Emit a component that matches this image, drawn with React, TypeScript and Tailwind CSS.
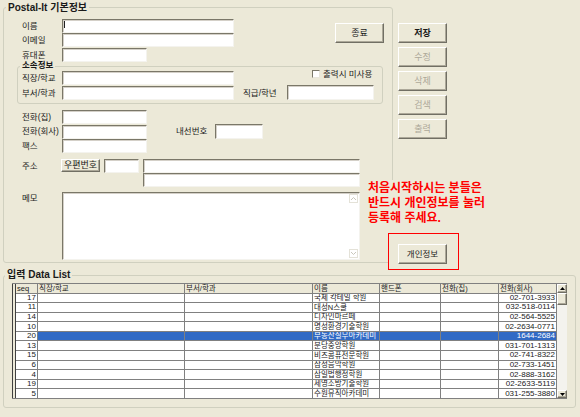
import React from 'react';

const font = "font-['Liberation_Sans','Noto_Sans_CJK_KR',sans-serif]";
const inp =
  'bg-white border border-t-[#7a7768] border-l-[#7a7768] border-r-[#f4f3ee] border-b-[#f4f3ee] shadow-[inset_1px_1px_0_#d4d0c8]';
const btn =
  'flex items-center justify-center bg-[#ECE9D8] border border-t-white border-l-white border-r-[#716f64] border-b-[#716f64] shadow-[inset_-1px_-1px_0_#aca899] leading-none';
const label = 'text-[8.5px] leading-none text-[#1a1a1a] whitespace-nowrap';

const rows = [
  ['17', '국제 칵테일 학원', '02-701-3933'],
  ['11', '대성N스쿨', '032-518-0114'],
  ['14', '디자인마르떼', '02-564-5525'],
  ['10', '명성환경기술학원', '02-2634-0771'],
  ['20', '부동산실무아카데미', '1644-2684'],
  ['13', '분당중앙학원', '031-701-1313'],
  ['15', '비즈콤퓨전문학원', '02-741-8322'],
  ['6', '삼성음악학원', '02-733-1451'],
  ['4', '삼일법행정학원', '02-888-3162'],
  ['19', '세영소방기술학원', '02-2633-5119'],
  ['5', '수원뮤직아카데미', '031-255-3880'],
];

const headers = ['seq', '직장/학교', '부서/학과', '이름', '핸드폰', '전화(집)', '전화(회사)'];

function Chevron({ up, color }: { up?: boolean; color: string }) {
  return (
    <svg width="7" height="5" viewBox="0 0 7 5">
      <path d={up ? 'M1 4 L3.5 1.5 L6 4' : 'M1 1 L3.5 3.5 L6 1'} stroke={color} strokeWidth="1" fill="none" />
    </svg>
  );
}

function Triangle({ up }: { up?: boolean }) {
  return (
    <svg width="5" height="3" viewBox="0 0 5 3">
      <path d={up ? 'M0 3 L2.5 0 L5 3 Z' : 'M0 0 L2.5 3 L5 0 Z'} fill="#000" />
    </svg>
  );
}

export default function App() {
  return (
    <div className={`relative w-[580px] h-[417px] overflow-hidden bg-[#ECE9D8] ${font}`}>
      {/* top area */}
      <div className="flex">
        <div className="relative ml-[3px] mt-[7px] w-[390px] h-[256px] border border-[#d0d0bf] rounded-[3px]">
          <span className="absolute left-[2px] -top-[6px] px-[2px] bg-[#ECE9D8] text-[10px] font-bold leading-[12px] text-[#1a1a1a]">
            Postal-It 기본정보
          </span>

          {/* 이름 / 이메일 / 휴대폰 */}
          <div className="flex ml-[18px] mt-[11px]">
            <div className="flex flex-col">
              <div className="flex items-center">
                <span className={`${label} w-[40px]`}>이름</span>
                <div className={`${inp} w-[172px] h-[14px]`}>
                  <div className="ml-[1px] mt-[1px] w-px h-[7px] bg-[#222]" />
                </div>
              </div>
              <div className="flex items-center">
                <span className={`${label} w-[40px]`}>이메일</span>
                <div className={`${inp} w-[172px] h-[14px]`} />
              </div>
              <div className="flex items-center mt-[1px]">
                <span className={`${label} w-[40px]`}>휴대폰</span>
                <div className={`${inp} w-[85px] h-[14px]`} />
              </div>
            </div>
            <div className={`${btn} ml-[101px] mt-[4px] w-[49px] h-[20px] text-[9px] text-[#1a1a1a]`}>종료</div>
          </div>

          {/* 소속정보 */}
          <div className="relative ml-[13px] mt-[4px] w-[366px] h-[38px] border border-[#d0d0bf] rounded-[3px]">
            <span className="absolute left-[2px] -top-[7px] px-[2px] bg-[#ECE9D8] text-[8.5px] font-bold leading-[10px] text-[#1a1a1a]">
              소속정보
            </span>
            <div className="flex items-center ml-[4px] mt-[4px]">
              <span className={`${label} w-[40px]`}>직장/학교</span>
              <div className={`${inp} w-[172px] h-[14px]`} />
              <div className="self-start -mt-[1px] ml-[78px] flex items-center gap-[3px]">
                <div className="w-[8px] h-[8px] bg-white border border-t-[#7a7768] border-l-[#7a7768] border-r-[#e8e6dc] border-b-[#e8e6dc]" />
                <span className={label}>출력시 미사용</span>
              </div>
            </div>
            <div className="flex items-center ml-[4px] mt-[1px]">
              <span className={`${label} w-[40px]`}>부서/학과</span>
              <div className={`${inp} w-[172px] h-[14px]`} />
              <span className={`${label} ml-[9px] w-[44px]`}>직급/학년</span>
              <div className={`${inp} w-[87px] h-[15px] -mt-px`} />
            </div>
          </div>

          {/* 전화 */}
          <div className="flex flex-col ml-[18px] mt-[6px]">
            <div className="flex items-center">
              <span className={`${label} w-[40px]`}>전화(집)</span>
              <div className={`${inp} w-[85px] h-[14px]`} />
            </div>
            <div className="flex items-center h-[15px]">
              <span className={`${label} w-[40px]`}>전화(회사)</span>
              <div className={`${inp} w-[85px] h-[14px] mt-px`} />
              <span className={`${label} ml-[29px] w-[39px]`}>내선번호</span>
              <div className={`${inp} w-[48px] h-[15px]`} />
            </div>
            <div className="flex items-center">
              <span className={`${label} w-[40px]`}>팩스</span>
              <div className={`${inp} w-[85px] h-[14px]`} />
            </div>
          </div>

          {/* 주소 */}
          <div className="flex items-start ml-[18px] mt-[6px]">
            <span className={`${label} w-[40px] h-[14px] flex items-center`}>주소</span>
            <div className={`${btn} -ml-px w-[39px] h-[13px] text-[9px] text-[#1a1a1a]`}>우편번호</div>
            <div className={`${inp} ml-[4px] w-[35px] h-[14px]`} />
            <div className="ml-[4px] flex flex-col">
              <div className={`${inp} w-[217px] h-[14px]`} />
              <div className={`${inp} w-[217px] h-[14px]`} />
            </div>
          </div>

          {/* 메모 */}
          <div className="flex items-start ml-[18px] mt-[5px]">
            <span className={`${label} w-[40px] mt-[2px]`}>메모</span>
            <div className={`${inp} w-[298px] h-[68px] flex flex-col items-end justify-between p-px`}>
              <div className="w-[9px] h-[9px] border border-[#e4e2d8] flex items-center justify-center">
                <Chevron up color="#c9c7bc" />
              </div>
              <div className="w-[9px] h-[9px] border border-[#e4e2d8] flex items-center justify-center">
                <Chevron color="#c9c7bc" />
              </div>
            </div>
          </div>
        </div>

        {/* right buttons */}
        <div className="ml-[5px] mt-[23px] flex flex-col gap-[4px]">
          <div className={`${btn} w-[49px] h-[20px] text-[9px] font-bold text-[#1a1a1a]`}>저장</div>
          <div className={`${btn} w-[49px] h-[20px] text-[9px] text-[#aca899]`}>수정</div>
          <div className={`${btn} w-[49px] h-[20px] text-[9px] text-[#aca899]`}>삭제</div>
          <div className={`${btn} w-[49px] h-[20px] text-[9px] text-[#aca899]`}>검색</div>
          <div className={`${btn} w-[49px] h-[20px] text-[9px] text-[#aca899]`}>출력</div>
        </div>
      </div>

      {/* data list */}
      <div className="relative ml-[3px] mt-[12px] w-[573px] h-[133px] border border-[#d0d0bf] rounded-[3px]">
        <span className="absolute left-[1px] -top-[7px] px-[2px] bg-[#ECE9D8] text-[10px] font-bold leading-[12px] text-[#1a1a1a]">
          입력 Data List
        </span>
        <div className="ml-[8px] mt-[7px] flex w-[555px] h-[116px] border-y border-[#808080]">
          <div className="w-[4px] border-x border-[#404040] bg-[#ECE9D8]" />
          <div className="grid w-[540px] gap-px bg-[#808080] grid-cols-[21px_146px_127px_66px_60px_57px_57px] grid-rows-[repeat(12,minmax(0,1fr))]">
            {headers.map((h) => (
              <div
                key={h}
                className="bg-[#ECE9D8] flex items-center px-[1px] text-[7.5px] leading-none text-[#222] overflow-hidden whitespace-nowrap"
              >
                {h}
              </div>
            ))}
            {rows.map(([seq, name, tel]) => {
              const sel = seq === '20';
              const cell = sel ? 'bg-[#316AC5] text-white' : 'bg-white text-[#222]';
              return (
                <React.Fragment key={seq}>
                  <div className="bg-white flex items-center justify-end pr-[1px] text-[8px] leading-none text-[#222]">
                    {seq}
                  </div>
                  <div className={cell} />
                  <div className={cell} />
                  <div className={`${cell} flex items-center px-[1px] text-[7.5px] leading-none overflow-hidden whitespace-nowrap`}>
                    {name}
                  </div>
                  <div className={cell} />
                  <div className={cell} />
                  <div className={`${cell} flex items-center justify-end pr-[1px] text-[8px] leading-none overflow-hidden whitespace-nowrap`}>
                    {tel}
                  </div>
                </React.Fragment>
              );
            })}
          </div>
          <div className="w-[11px] border-l border-[#808080] flex flex-col bg-[#f4f3ee]">
            <div className={`${btn} h-[9px]`}>
              <Triangle up />
            </div>
            <div className={`${btn} h-[12px]`} />
            <div className="flex-1" />
            <div className={`${btn} h-[8px]`}>
              <Triangle />
            </div>
          </div>
        </div>
      </div>

      {/* notice overlay */}
      <div className="absolute left-[366px] top-[180px] w-[126px] h-[53px] bg-[#ECE9D8] pl-[2px] pt-[1px] text-[12px] font-bold leading-[15px] text-[#ff0000] whitespace-nowrap">
        <div>처음시작하시는 분들은</div>
        <div>반드시 개인정보를 눌러</div>
        <div>등록해 주세요.</div>
      </div>
      <div className="absolute left-[388px] top-[233px] w-[71px] h-[37px] border border-[#ff0000] bg-[#ECE9D8]">
        <div className={`${btn} ml-[9px] mt-[10px] w-[49px] h-[20px] text-[8.5px] text-[#1a1a1a]`}>개인정보</div>
      </div>
    </div>
  );
}
